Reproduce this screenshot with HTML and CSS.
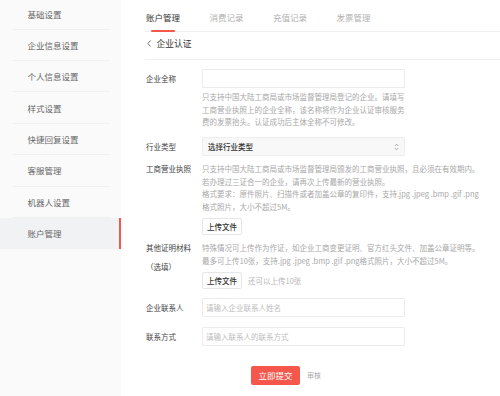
FILE: index.html
```html
<!DOCTYPE html>
<html lang="zh-CN">
<head>
<meta charset="utf-8">
<title>企业认证</title>
<link rel="stylesheet" href="styles.css">
</head>
<body>
<div class="page">
  <aside class="sidebar">
    <ul class="menu">
      <li class="menu-item"><span class="menu-label">基础设置</span></li>
      <li class="menu-item"><span class="menu-label">企业信息设置</span></li>
      <li class="menu-item"><span class="menu-label">个人信息设置</span></li>
      <li class="menu-item"><span class="menu-label">样式设置</span></li>
      <li class="menu-item"><span class="menu-label">快捷回复设置</span></li>
      <li class="menu-item"><span class="menu-label">客服管理</span></li>
      <li class="menu-item"><span class="menu-label">机器人设置</span></li>
      <li class="menu-item active"><span class="menu-label">账户管理</span></li>
    </ul>
  </aside>
  <main class="main">
    <nav class="tabs">
      <span class="tab active">账户管理</span>
      <span class="tab">消费记录</span>
      <span class="tab">充值记录</span>
      <span class="tab">发票管理</span>
    </nav>
    <div class="back-row">
      <svg class="back-icon" width="4" height="7" viewBox="0 0 4 7"><path d="M3.5 0.5 L0.8 3.5 L3.5 6.5" fill="none" stroke="#666" stroke-width="0.9"/></svg>
      <span>企业认证</span>
    </div>
    <div class="form">
      <div class="row row-first">
        <span class="label">企业全称</span>
        <div class="field">
          <input class="input" type="text">
          <p class="hint hint-narrow">只支持中国大陆工商局或市场监督管理局登记的企业。请填写<br>工商营业执照上的企业全称，该名称将作为企业认证审核服务<br>费的发票抬头。认证成功后主体全称不可修改。</p>
        </div>
      </div>
      <div class="row row-select">
        <span class="label">行业类型</span>
        <div class="field">
          <div class="select">
            <span>选择行业类型</span>
            <svg class="select-arrow" width="5" height="8" viewBox="0 0 5 8"><path d="M0.8 3 L2.5 1.2 L4.2 3 M0.8 5 L2.5 6.8 L4.2 5" fill="none" stroke="#999" stroke-width="0.8"/></svg>
          </div>
        </div>
      </div>
      <div class="row row-hint row-license">
        <span class="label">工商营业执照</span>
        <div class="field">
          <p class="hint hint-wide">只支持中国大陆工商局或市场监督管理局颁发的工商营业执照，且必须在有效期内。<br>若办理过三证合一的企业，请再次上传最新的营业执照。<br>格式要求：原件照片、扫描件或者加盖公章的复印件，支持.jpg .jpeg .bmp .gif .png<br>格式照片，大小不超过5M。</p>
          <div class="upload-line">
            <button class="upload-btn" type="button">上传文件</button>
          </div>
        </div>
      </div>
      <div class="row row-hint row-other">
        <span class="label"><span class="label-line">其他证明材料</span><span class="label-line label-sub">（选填）</span></span>
        <div class="field">
          <p class="hint hint-wide">特殊情况可上传作为作证，如企业工商变更证明、官方红头文件、加盖公章证明等。<br>最多可上传10张，支持.jpg .jpeg .bmp .gif .png格式照片，大小不超过5M。</p>
          <div class="upload-line">
            <button class="upload-btn" type="button">上传文件</button>
            <span class="upload-note">还可以上传10张</span>
          </div>
        </div>
      </div>
      <div class="row row-contact">
        <span class="label">企业联系人</span>
        <div class="field">
          <input class="input" type="text" placeholder="请输入企业联系人姓名">
        </div>
      </div>
      <div class="row row-phone">
        <span class="label">联系方式</span>
        <div class="field">
          <input class="input" type="text" placeholder="请输入联系人的联系方式">
        </div>
      </div>
      <div class="submit-row">
        <button class="submit-btn" type="button">立即提交</button>
        <span class="submit-note">审核</span>
      </div>
    </div>
  </main>
</div>
</body>
</html>
```

FILE: styles.css
```css
* {
  box-sizing: border-box;
  margin: 0;
  padding: 0;
}

body {
  margin: 0;
  width: 500px;
  height: 396px;
  overflow: hidden;
  background: #ffffff;
  font-family: "Noto Sans CJK SC", "Noto Sans", sans-serif;
}

.page {
  display: flex;
  height: 396px;
}

/* Sidebar */
.sidebar {
  width: 121px;
  flex: none;
  background: #fafafa;
}

.menu {
  list-style: none;
  margin-top: -1.7px;
}

.menu-item {
  height: 31.4px;
  padding: 0 11px 0 13px;
}

.menu-item.active {
  background: #f1f2f4;
  border-right: 2px solid #f5574c;
}

.menu-label {
  display: flex;
  align-items: center;
  height: 100%;
  padding-left: 14.5px;
  font-size: 8.5px;
  color: #666666;
  border-bottom: 1px solid #f0f0f0;
}

.menu-item.active .menu-label {
  border-bottom-color: transparent;
}

/* Main */
.main {
  flex: 1;
  padding-left: 24px;
}

.tabs {
  display: flex;
  height: 32px;
  padding-top: 2px;
  padding-left: 1px;
  gap: 29.5px;
  border-bottom: 1px solid #f0f0f0;
}

.tab {
  position: relative;
  display: flex;
  align-items: center;
  font-size: 8.5px;
  color: #b0b0b0;
}

.tab.active {
  color: #333333;
}

.tab.active::after {
  content: "";
  position: absolute;
  left: 50%;
  bottom: -1px;
  width: 24px;
  margin-left: -12px;
  height: 2px;
  border-radius: 1px;
  background: #f5574c;
}

.back-row {
  display: flex;
  align-items: center;
  gap: 6px;
  height: 28px;
  padding-left: 1.5px;
  padding-bottom: 4px;
  border-bottom: 1px solid #f0f0f0;
  font-size: 8.75px;
  color: #333333;
}

.back-icon {
  display: block;
}

/* Form */
.form {
  padding-top: 8.5px;
  padding-left: 1px;
}

.row {
  display: grid;
  grid-template-columns: 56px 1fr;
}

.label {
  font-size: 7.5px;
  line-height: 19px;
  color: #444444;
  white-space: nowrap;
}

.row-hint .label {
  line-height: 12.5px;
}

.label-line {
  display: block;
}

.label-sub {
  margin-top: 6px;
}

.field {
  display: flex;
  flex-direction: column;
  align-items: flex-start;
}

.input {
  display: block;
  width: 203px;
  height: 19px;
  padding: 0 3px;
  border: 1px solid #ececec;
  border-radius: 1px;
  background: #ffffff;
  font-family: inherit;
  font-size: 7.5px;
  color: #333333;
  outline: none;
}

.input::placeholder {
  color: #bdbdbd;
}

.hint {
  font-size: 7.5px;
  color: #a8a8a8;
  white-space: nowrap;
}

.hint-narrow {
  margin-top: 3.5px;
  line-height: 12.7px;
}

.hint-wide {
  line-height: 12.5px;
}

.row-select {
  margin-top: 8px;
}

.select {
  display: flex;
  align-items: center;
  justify-content: space-between;
  width: 203px;
  height: 19px;
  padding: 0 5px 0 5px;
  border: 1px solid #eeeeee;
  border-radius: 1px;
  background: #f8f8f8;
  font-size: 7.5px;
  font-weight: 500;
  color: #333333;
}

.select-arrow {
  display: block;
}

.row-license {
  margin-top: 7px;
}

.row-other {
  margin-top: 7px;
}

.upload-line {
  display: flex;
  align-items: center;
  gap: 6px;
  margin-top: 5px;
}

.upload-btn {
  width: 40px;
  height: 17px;
  border: 1px solid #e6e6e6;
  border-radius: 2px;
  background: #ffffff;
  font-family: inherit;
  font-size: 7.5px;
  font-weight: 500;
  color: #333333;
}

.upload-note {
  font-size: 7.5px;
  color: #b5b5b5;
}

.row-contact {
  margin-top: 9px;
}

.row-phone {
  margin-top: 10px;
}

.submit-row {
  display: flex;
  align-items: center;
  gap: 7px;
  margin-top: 19.5px;
  padding-left: 105px;
}

.submit-btn {
  width: 49px;
  height: 19px;
  border: none;
  border-radius: 2px;
  background: #f5574c;
  font-family: inherit;
  font-size: 8.5px;
  color: #ffffff;
}

.submit-note {
  font-size: 7px;
  color: #a8a8a8;
}
```
